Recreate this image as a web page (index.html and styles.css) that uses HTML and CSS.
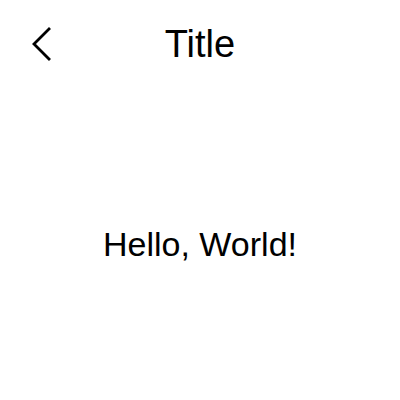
FILE: index.html
```html
<!DOCTYPE html>
<html>
<head>
<meta charset="utf-8">
<link rel="stylesheet" href="styles.css">
</head>
<body>
<div class="screen">
  <header class="nav">
    <div class="nav-left">
      <svg class="back" width="22" height="34" viewBox="0 0 22 34" aria-label="Back">
        <polyline points="17,2 2,17 17,32" fill="none" stroke="#000" stroke-width="2.8" stroke-linecap="square" stroke-linejoin="miter"/>
      </svg>
    </div>
    <h1 class="nav-title">Title</h1>
    <div class="nav-right"></div>
  </header>
  <main class="content">
    <p class="greeting">Hello, World!</p>
  </main>
</div>
</body>
</html>
```

FILE: styles.css
```css
html, body {
  margin: 0;
  padding: 0;
  background: #fff;
}
body {
  font-family: "Liberation Sans", Arial, sans-serif;
  color: #000;
}
.screen {
  width: 400px;
  height: 400px;
  display: flex;
  flex-direction: column;
}
.nav {
  height: 88px;
  display: grid;
  grid-template-columns: 1fr auto 1fr;
  align-items: center;
}
.nav-left {
  padding-left: 32px;
  display: flex;
  align-items: center;
}
.back {
  display: block;
}
.nav-title {
  margin: 0;
  font-size: 38px;
  font-weight: normal;
  line-height: 1;
}
.content {
  flex: 1;
  display: flex;
  align-items: center;
  justify-content: center;
}
.greeting {
  margin: 0;
  font-size: 34px;
  line-height: 1;
}
```
